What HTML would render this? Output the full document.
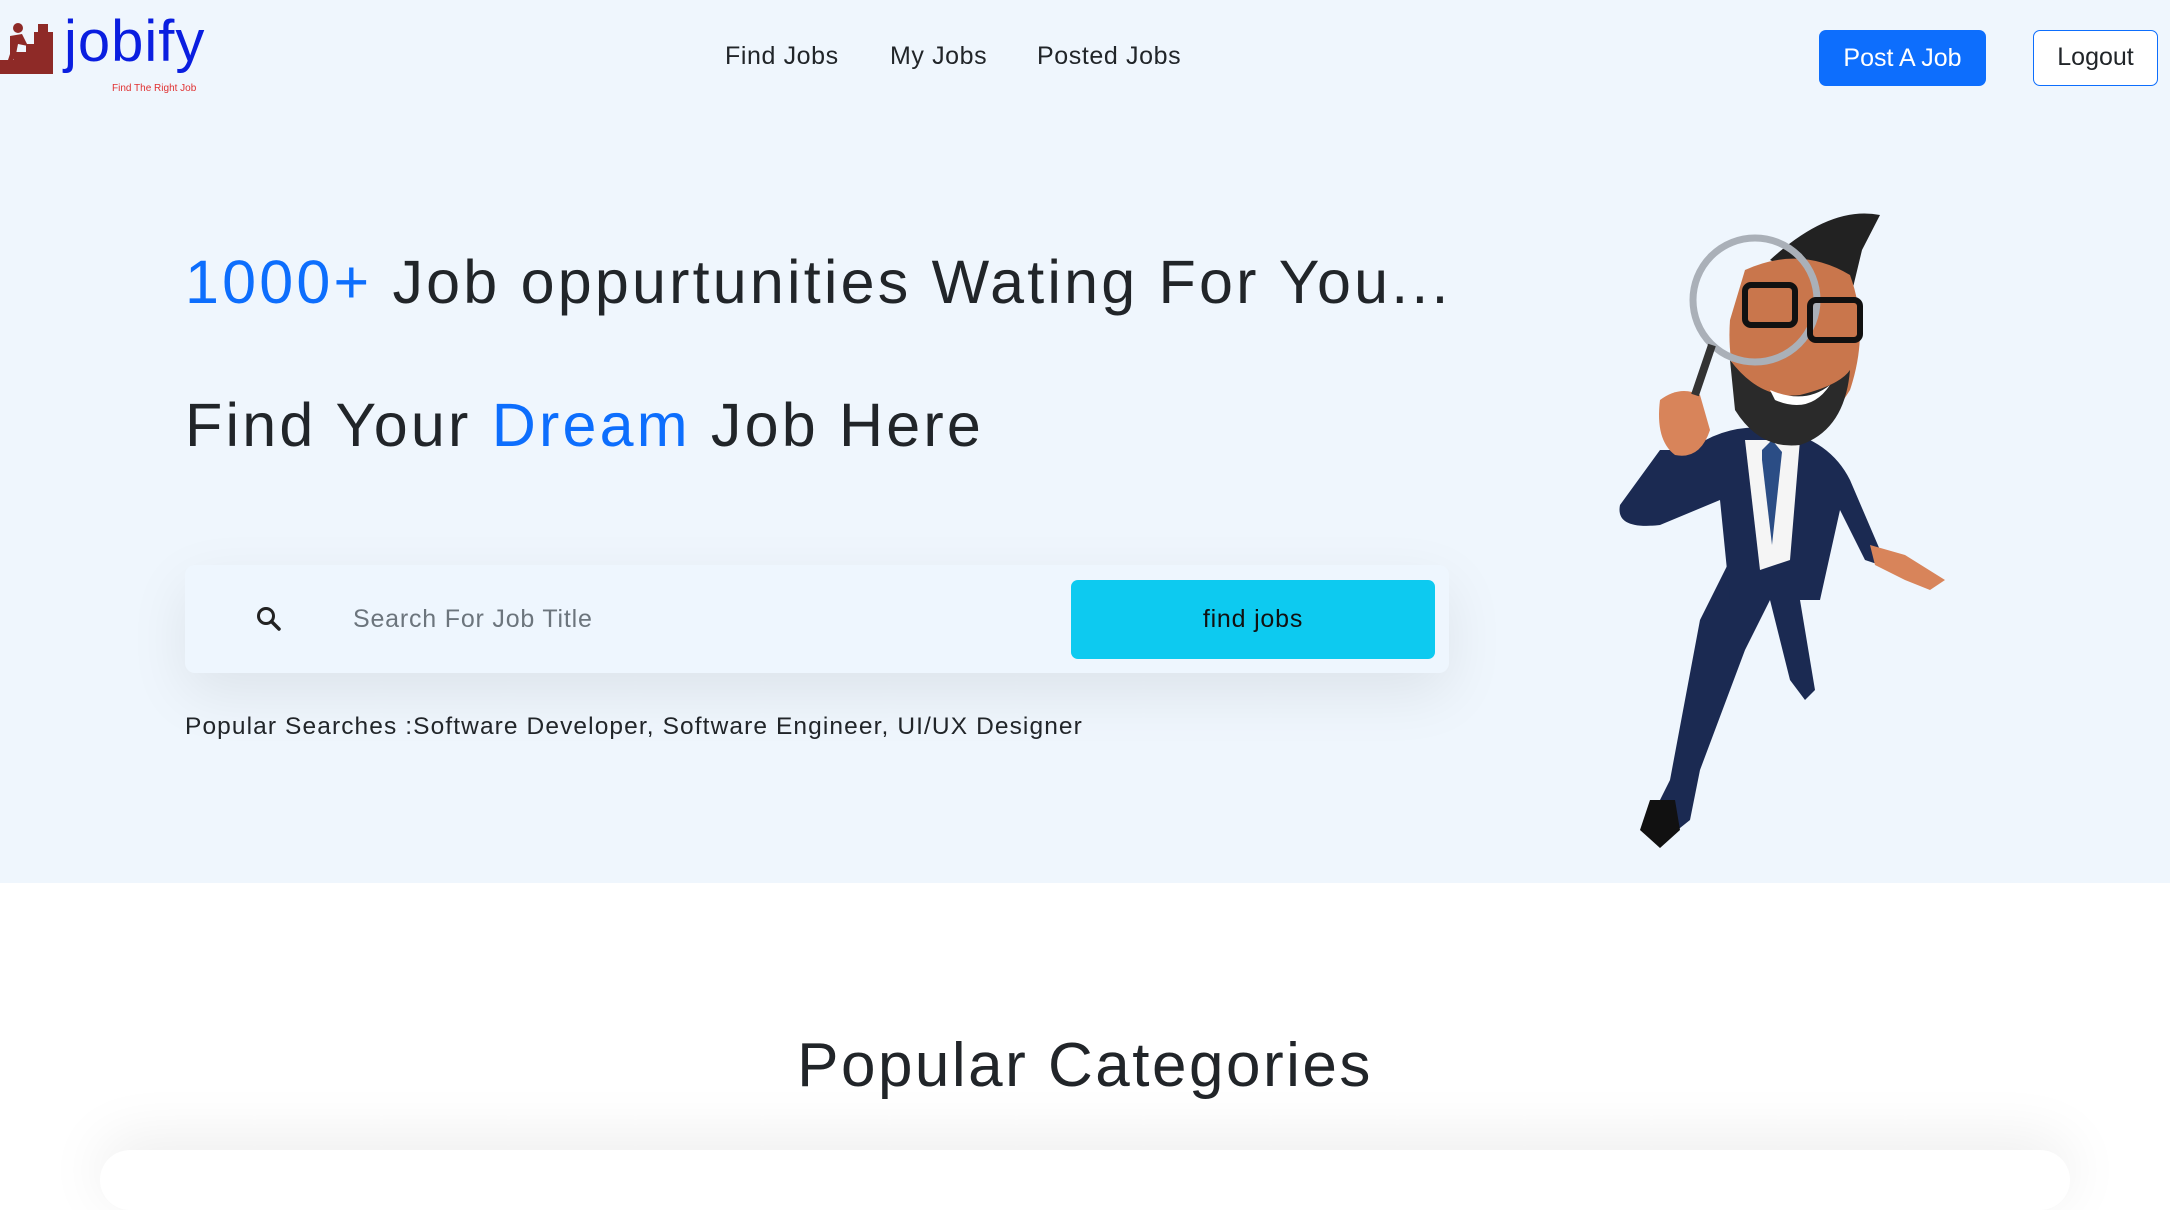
<!DOCTYPE html>
<html><head><meta charset="utf-8"><style>
*{margin:0;padding:0;box-sizing:border-box}
body{width:2170px;height:1135px;overflow:hidden;background:#fff;font-family:"Liberation Sans",sans-serif;color:#212529;position:relative}
.hero{position:absolute;left:0;top:0;width:2170px;height:883px;background:#eff6fd}
.a{position:absolute;white-space:nowrap}
.nav{font-size:25px;top:42px;letter-spacing:.6px}
.btn1{position:absolute;left:1819px;top:30px;width:167px;height:56px;background:#0d6efd;color:#fff;border-radius:7px;font-size:25px;text-align:center;line-height:56px}
.btn2{position:absolute;left:2033px;top:30px;width:125px;height:56px;border:1.5px solid #0d6efd;color:#212529;border-radius:7px;font-size:25px;text-align:center;line-height:53px;background:#fff}
.h{font-size:61px;color:#212529;letter-spacing:3.2px}
.blue{color:#0d6efd}
.search{position:absolute;left:185px;top:565px;width:1264px;height:108px;background:#eef6fe;border-radius:10px;box-shadow:0 20px 60px rgba(0,0,0,.08)}
.fb{position:absolute;left:1071px;top:580px;width:364px;height:79px;background:#0dcaf0;border-radius:7px;font-size:25px;text-align:center;line-height:79px;color:#111;letter-spacing:.8px}
</style></head><body>
<div class="hero"></div>
<svg class="a" style="left:0;top:20px" width="56" height="56" viewBox="0 0 56 56">
<path d="M0 40 L14 40 L14 32 L26 32 L26 24 L34 24 L34 12 L53 12 L53 54 L0 54Z" fill="#8e2a27"/>
<rect x="38" y="4" width="10" height="8" fill="#8e2a27"/>
<circle cx="18" cy="8" r="5" fill="#8e2a27"/>
<path d="M10 16 L22 14 L28 26 L18 24 L16 34 L10 48 L6 46 L10 34Z" fill="#8e2a27"/>
</svg>
<div class="a" style="left:64px;top:8px;font-size:58px;color:#0a1ee0;letter-spacing:1px">jobify</div>
<div class="a" style="left:112px;top:83px;font-size:10px;color:#e03030">Find The Right Job</div>
<div class="a nav" style="left:725px">Find Jobs</div>
<div class="a nav" style="left:890px">My Jobs</div>
<div class="a nav" style="left:1037px">Posted Jobs</div>
<div class="btn1">Post A Job</div>
<div class="btn2">Logout</div>
<div class="a h" style="left:185px;top:247px"><span class="blue">1000+</span> Job oppurtunities Wating For You...</div>
<div class="a h" style="left:185px;top:390px"><span>Find Your</span> <span class="blue">Dream</span> Job Here</div>
<div class="search"></div>
<svg class="a" style="left:256px;top:606px" width="26" height="26" viewBox="0 0 26 26"><circle cx="10" cy="10" r="7.5" fill="none" stroke="#222" stroke-width="3"/><path d="M15.5 15.5 L23 23" stroke="#222" stroke-width="3.5" stroke-linecap="round"/></svg>
<div class="a" style="left:353px;top:605px;font-size:25px;color:#6c757d;letter-spacing:.8px">Search For Job Title</div>
<div class="fb">find jobs</div>
<div class="a" style="left:185px;top:713px;font-size:24.5px;letter-spacing:1.1px">Popular Searches :Software Developer, Software Engineer, UI/UX Designer</div>
<svg class="a" style="left:1600px;top:205px" width="360" height="650" viewBox="1600 205 360 650">
<path d="M1770 260 Q1830 205 1880 215 L1862 250 L1850 300 Z" fill="#222"/>
<path d="M1730 560 L1700 620 L1670 780 L1650 820 L1665 840 L1690 820 L1700 770 L1745 650 L1770 600 L1790 680 L1805 700 L1815 690 L1800 600 L1790 540Z" fill="#1b2a52"/>
<path d="M1650 800 L1640 830 L1660 848 L1680 830 L1675 800Z" fill="#111"/>
<path d="M1690 450 Q1730 420 1780 430 Q1830 440 1850 480 L1880 550 L1880 565 L1865 560 L1840 510 L1820 600 L1730 600 L1720 500 L1660 525 Q1615 530 1620 505 L1660 450Z" fill="#1b2a52"/>
<path d="M1745 440 L1760 570 L1790 560 L1800 440Z" fill="#f5f5f5"/>
<path d="M1762 450 L1772 440 L1782 452 L1772 545 L1762 460Z" fill="#2b4d85"/>
<path d="M1870 545 L1905 555 L1945 580 L1930 590 L1905 580 L1875 565Z" fill="#d8845a"/>
<path d="M1660 400 Q1680 385 1700 395 L1710 430 Q1700 460 1675 455 Q1655 440 1660 400Z" fill="#d8845a"/>
<path d="M1745 270 Q1800 245 1850 275 Q1870 330 1850 390 Q1810 455 1765 430 Q1725 390 1730 320Z" fill="#c9764c"/>
<path d="M1730 360 Q1760 400 1800 395 Q1840 385 1850 370 Q1845 430 1800 445 Q1760 450 1735 410Z" fill="#2a2a2a"/>
<path d="M1770 390 Q1805 405 1830 385 Q1810 415 1775 400Z" fill="#fff"/>
<circle cx="1755" cy="300" r="62" fill="none" stroke="#aab0b8" stroke-width="7"/>
<path d="M1712 345 L1695 395" stroke="#333" stroke-width="8"/>
<rect x="1745" y="285" width="50" height="40" rx="6" fill="none" stroke="#111" stroke-width="6"/>
<rect x="1810" y="300" width="50" height="40" rx="6" fill="none" stroke="#111" stroke-width="6"/>
</svg>
<div class="a" style="left:100px;top:1150px;width:1970px;height:60px;background:#fff;border-radius:40px;box-shadow:0 -10px 60px rgba(0,0,0,.08)"></div>
<div class="a" style="left:0;top:1030px;width:2170px;text-align:center;font-size:62px;color:#212529;letter-spacing:2.5px">Popular Categories</div>
</body></html>
